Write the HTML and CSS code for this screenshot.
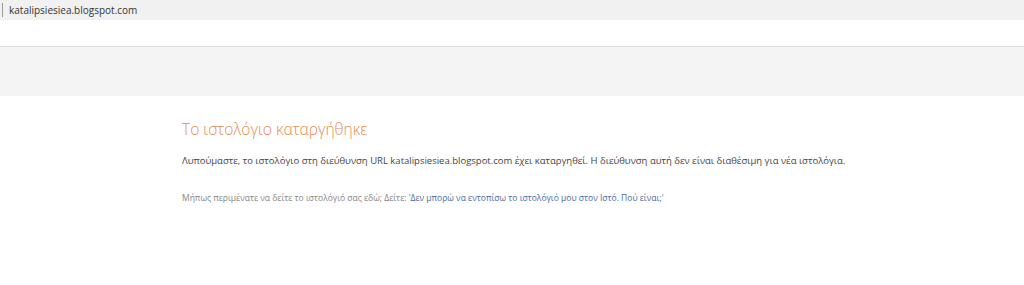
FILE: index.html
```html
<!DOCTYPE html>
<html lang="el">

<head>
    <meta charset="UTF-8">
    <title>katalipsiesiea.blogspot.com</title>
    <link rel="stylesheet" href="styles.css">
</head>

<body>
    <div class="addressbar">
        <span class="divider"></span>
        <span class="url">katalipsiesiea.blogspot.com</span>
    </div>
    <div class="toolbar"></div>
    <div class="header"></div>

    <div class="content">
        <h3 class="title">Το ιστολόγιο καταργήθηκε</h3>
        <p class="message">Λυπούμαστε, το ιστολόγιο στη διεύθυνση URL katalipsiesiea.blogspot.com έχει καταργηθεί. Η διεύθυνση αυτή δεν είναι διαθέσιμη για νέα ιστολόγια.</p>
        <p class="hint">Μήπως περιμένατε να δείτε το ιστολόγιό σας εδώ; Δείτε: <a href="#">'Δεν μπορώ να εντοπίσω το ιστολόγιό μου στον Ιστό. Πού είναι;'</a></p>
    </div>
</body>

</html>
```

FILE: styles.css
```css
body {
    margin: 0;
    font-family: "Open Sans", Arial, sans-serif;
    background-color: #fff;
}

.addressbar {
    height: 20px;
    background-color: #f1f1f1;
    display: flex;
    align-items: center;
    padding-left: 2px;
}

.divider {
    width: 1px;
    height: 14px;
    background-color: #9a9a9a;
    margin-right: 6px;
}

.url {
    font-size: 10px;
    color: #333;
}

.toolbar {
    height: 26px;
    background-color: #fff;
    border-bottom: 1px solid #dcdcdc;
}

.header {
    height: 49px;
    background-color: #f4f4f4;
}

.content {
    padding: 22px 0 0 182px;
}

.title {
    margin: 0;
    font-size: 15.6px;
    font-weight: 300;
    color: #e28d52;
}

.message {
    margin: 14px 0 0;
    font-size: 9.5px;
    color: #444;
}

.hint {
    margin: 25px 0 0;
    font-size: 8.5px;
    color: #858585;
}

.hint a {
    color: #4a6aa5;
    text-decoration: none;
}
```
